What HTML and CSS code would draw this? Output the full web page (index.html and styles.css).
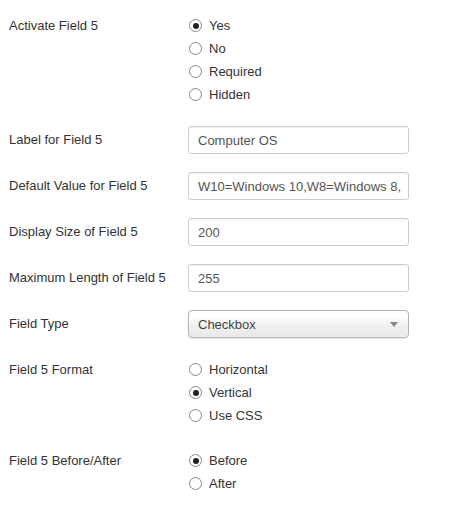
FILE: index.html
```html
<!DOCTYPE html>
<html>
<head>
<meta charset="utf-8">
<link rel="stylesheet" href="styles.css">
</head>
<body>
<form class="form">
  <div class="row radio-row">
    <div class="label">Activate Field 5</div>
    <div class="controls radios">
      <label class="radio"><input type="radio" name="a" checked><span>Yes</span></label>
      <label class="radio"><input type="radio" name="a"><span>No</span></label>
      <label class="radio"><input type="radio" name="a"><span>Required</span></label>
      <label class="radio"><input type="radio" name="a"><span>Hidden</span></label>
    </div>
  </div>
  <div class="row">
    <div class="label input-label">Label for Field 5</div>
    <div class="controls"><input class="text" type="text" value="Computer OS"></div>
  </div>
  <div class="row">
    <div class="label input-label">Default Value for Field 5</div>
    <div class="controls"><input class="text" type="text" value="W10=Windows 10,W8=Windows 8,"></div>
  </div>
  <div class="row">
    <div class="label input-label">Display Size of Field 5</div>
    <div class="controls"><input class="text" type="text" value="200"></div>
  </div>
  <div class="row">
    <div class="label input-label">Maximum Length of Field 5</div>
    <div class="controls"><input class="text" type="text" value="255"></div>
  </div>
  <div class="row">
    <div class="label input-label">Field Type</div>
    <div class="controls">
      <div class="select"><span>Checkbox</span><span class="arrow"></span></div>
    </div>
  </div>
  <div class="row radio-row second">
    <div class="label">Field 5 Format</div>
    <div class="controls radios">
      <label class="radio"><input type="radio" name="f"><span>Horizontal</span></label>
      <label class="radio"><input type="radio" name="f" checked><span>Vertical</span></label>
      <label class="radio"><input type="radio" name="f"><span>Use CSS</span></label>
    </div>
  </div>
  <div class="row radio-row last">
    <div class="label">Field 5 Before/After</div>
    <div class="controls radios">
      <label class="radio"><input type="radio" name="b" checked><span>Before</span></label>
      <label class="radio"><input type="radio" name="b"><span>After</span></label>
    </div>
  </div>
</form>
</body>
</html>
```

FILE: styles.css
```css
html, body {
  margin: 0;
  padding: 0;
  background: #fff;
}
body {
  font-family: "Liberation Sans", Arial, sans-serif;
  font-size: 13px;
  color: #333;
}
.form {
  padding-top: 12px;
  width: 458px;
}
.row {
  display: flex;
  margin-bottom: 18px;
}
.label {
  width: 179px;
  padding-left: 9px;
  flex: none;
}
.input-label {
  line-height: 28px;
}
.radio-row .label {
  padding-top: 2px;
  line-height: 23px;
}
.radio-row.second {
  margin-top: 1px;
}
.radio-row.last {
  margin-top: 4px;
}
.controls {
  flex: none;
}
.radios {
  padding: 2px 0 2px 1px;
  display: flex;
  flex-direction: column;
}
.radio {
  display: flex;
  align-items: center;
  height: 23px;
  line-height: 23px;
}
.radio input {
  -webkit-appearance: none;
  appearance: none;
  margin: 0 7px 0 0;
  width: 13px;
  height: 13px;
  border: 1px solid #8a8a8a;
  border-radius: 50%;
  background: #fff;
  box-sizing: border-box;
  position: relative;
  flex: none;
}
.radio input:checked::after {
  content: "";
  position: absolute;
  left: 2.5px;
  top: 2.5px;
  width: 6px;
  height: 6px;
  border-radius: 50%;
  background: #222;
}
.text {
  box-sizing: border-box;
  width: 221px;
  height: 28px;
  border: 1px solid #ccc;
  border-radius: 3px;
  padding: 0 5px 0 9px;
  font-family: "Liberation Sans", Arial, sans-serif;
  font-size: 13px;
  color: #555;
  background: #fff;
  margin: 0;
  display: block;
  box-shadow: inset 0 1px 1px rgba(0,0,0,0.05);
}
.select {
  box-sizing: border-box;
  width: 221px;
  height: 28px;
  border: 1px solid #b4b4b4;
  border-radius: 4px;
  padding: 0 10px 0 9px;
  display: flex;
  align-items: center;
  justify-content: space-between;
  background: linear-gradient(#ffffff 20%, #f2f2f2 50%, #e8e8e8);
  color: #444;
  box-shadow: 0 0 2px #fff inset, 0 1px 1px rgba(0,0,0,0.08);
}
.arrow {
  width: 0;
  height: 0;
  border-left: 4px solid transparent;
  border-right: 4px solid transparent;
  border-top: 5px solid #888;
}
```
